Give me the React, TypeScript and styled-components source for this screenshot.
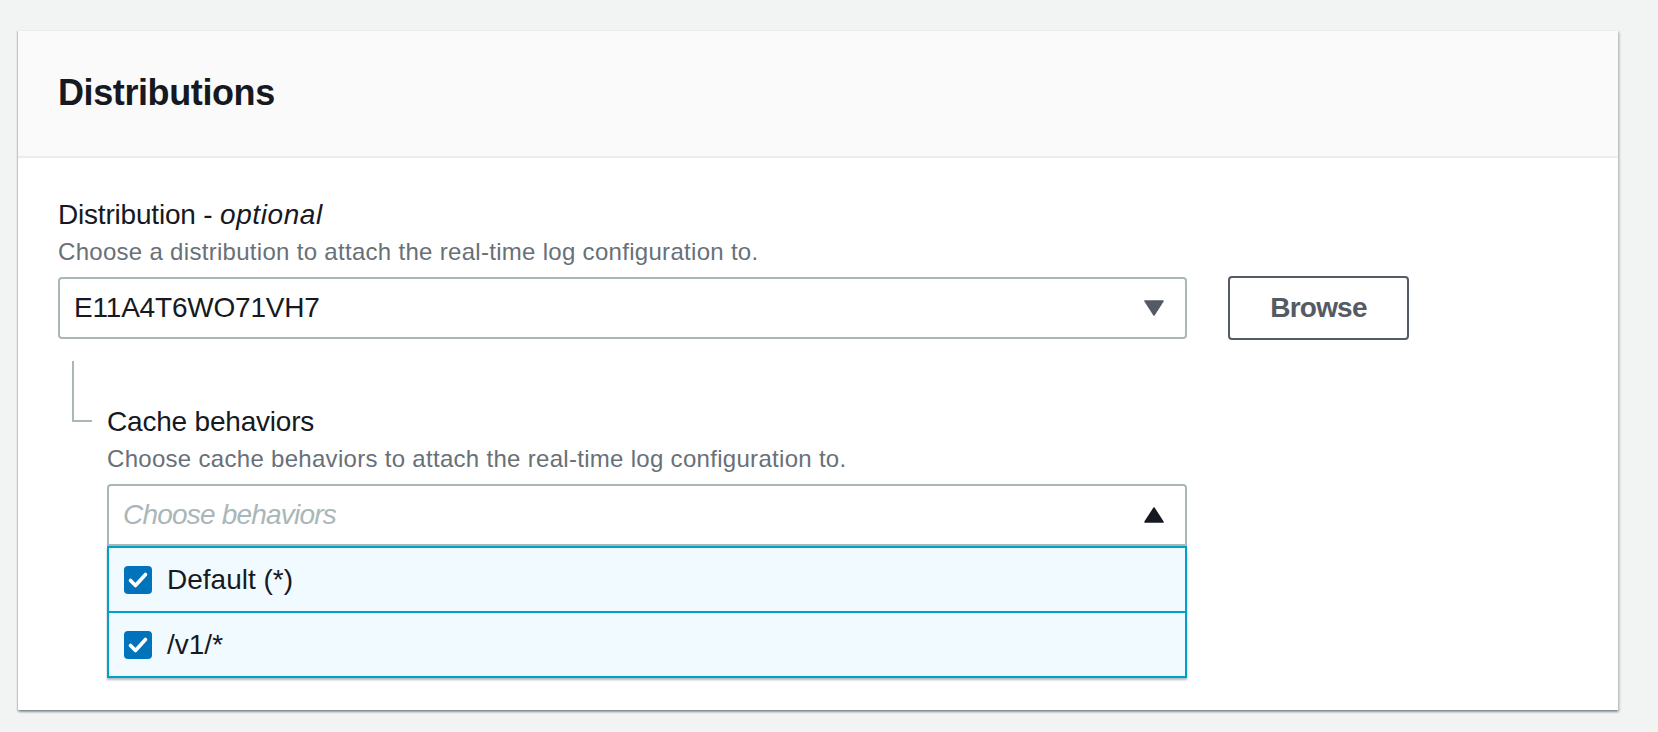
import styled, { createGlobalStyle } from 'styled-components';

const GlobalStyle = createGlobalStyle`
  html, body {
    margin: 0;
    padding: 0;
    background: #f2f3f3;
  }
  body {
    font-family: 'Liberation Sans', Arial, sans-serif;
    color: #16191f;
  }
`;

type Behavior = { id: string; label: string; checked: boolean };

const BEHAVIORS: Behavior[] = [
  { id: 'default', label: 'Default (*)', checked: true },
  { id: 'v1', label: '/v1/*', checked: true },
];

const Caret = ({ up, color }: { up?: boolean; color: string }) => (
  <svg width='20' height='16' viewBox='0 0 20 16' aria-hidden='true'>
    {up ? (
      <path d='M10 1 L19 15 L1 15 Z' fill={color} strokeLinejoin='round' stroke={color} strokeWidth='1.5' />
    ) : (
      <path d='M1 1 L19 1 L10 15 Z' fill={color} strokeLinejoin='round' stroke={color} strokeWidth='1.5' />
    )}
  </svg>
);

const CheckIcon = () => (
  <svg width='28' height='28' viewBox='0 0 28 28' aria-hidden='true'>
    <rect x='0' y='0' width='28' height='28' rx='4' fill='#0073bb' />
    <path
      d='M6.5 14.5 L11.5 19.5 L21.5 8.5'
      fill='none'
      stroke='#ffffff'
      strokeWidth='3.6'
      strokeLinecap='round'
      strokeLinejoin='round'
    />
  </svg>
);

export default function App() {
  return (
    <>
      <GlobalStyle />
      <Page>
        <Panel>
          <PanelHeader>
            <Title>Distributions</Title>
          </PanelHeader>
          <PanelBody>
            <Label>
              Distribution - <em>optional</em>
            </Label>
            <Description>Choose a distribution to attach the real-time log configuration to.</Description>
            <SelectRow>
              <Select>
                <SelectValue>E11A4T6WO71VH7</SelectValue>
                <Caret color='#545b64' />
              </Select>
              <Button>Browse</Button>
            </SelectRow>

            <Nested>
              <ConnectorColumn>
                <Connector />
              </ConnectorColumn>
              <NestedContent>
                <Label>Cache behaviors</Label>
                <Description>Choose cache behaviors to attach the real-time log configuration to.</Description>
                <MultiSelect>
                  <Select $open>
                    <Placeholder>Choose behaviors</Placeholder>
                    <Caret up color='#16191f' />
                  </Select>
                  <Menu>
                    {BEHAVIORS.map(b => (
                      <Option key={b.id}>
                        {b.checked && <CheckIcon />}
                        <OptionLabel>{b.label}</OptionLabel>
                      </Option>
                    ))}
                  </Menu>
                </MultiSelect>
              </NestedContent>
            </Nested>
          </PanelBody>
        </Panel>
      </Page>
    </>
  );
}

const Page = styled.div`
  padding: 30px 40px 22px 18px;
`;

const Panel = styled.section`
  width: 1600px;
  background: #ffffff;
  border-top: 1px solid #eaeded;
  box-shadow:
    0 2px 2px 0 rgba(0, 28, 36, 0.3),
    2px 2px 2px 0 rgba(0, 28, 36, 0.15),
    -1px 1px 1px 0 rgba(0, 28, 36, 0.12);
`;

const PanelHeader = styled.header`
  background: #fafafa;
  border-bottom: 2px solid #eaeded;
  padding: 40px 40px 41px;
`;

const Title = styled.h2`
  margin: 0;
  font-size: 36px;
  line-height: 44px;
  font-weight: 700;
  letter-spacing: -0.4px;
  color: #16191f;
`;

const PanelBody = styled.div`
  padding: 37px 40px 32px;
`;

const Label = styled.div`
  font-size: 28px;
  line-height: 40px;
  letter-spacing: -0.2px;
  color: #16191f;

  em {
    font-style: italic;
    letter-spacing: 0.6px;
  }
`;

const Description = styled.div`
  font-size: 24px;
  line-height: 32px;
  letter-spacing: 0.3px;
  color: #687078;
  margin-top: 1px;
`;

const SelectRow = styled.div`
  display: flex;
  align-items: center;
  gap: 41px;
  margin-top: 8px;
`;

const Select = styled.div<{ $open?: boolean }>`
  box-sizing: border-box;
  width: ${p => (p.$open ? '100%' : '1129px')};
  height: 62px;
  display: flex;
  align-items: center;
  justify-content: space-between;
  padding: 0 21px 0 14px;
  border: 2px solid #aab7b8;
  border-radius: ${p => (p.$open ? '4px 4px 0 0' : '4px')};
  background: #ffffff;
`;

const SelectValue = styled.span`
  font-size: 28px;
  letter-spacing: -0.2px;
  color: #16191f;
`;

const Placeholder = styled.span`
  font-size: 28px;
  font-style: italic;
  letter-spacing: -0.8px;
  color: #aab7b8;
`;

const Button = styled.button`
  box-sizing: border-box;
  width: 181px;
  height: 64px;
  border: 2px solid #545b64;
  border-radius: 4px;
  background: #ffffff;
  color: #545b64;
  font-family: 'Liberation Sans', Arial, sans-serif;
  font-size: 28px;
  font-weight: 700;
  letter-spacing: -0.8px;
  cursor: pointer;
`;

const Nested = styled.div`
  display: flex;
  margin-top: 21px;
`;

const ConnectorColumn = styled.div`
  width: 49px;
  flex-shrink: 0;
`;

const Connector = styled.div`
  margin-left: 14px;
  width: 18px;
  height: 59px;
  border-left: 2px solid #aab7b8;
  border-bottom: 2px solid #aab7b8;
`;

const NestedContent = styled.div`
  flex: 1;
  padding-top: 41px;
  max-width: 1080px;
`;

const MultiSelect = styled.div`
  margin-top: 9px;
`;

const Menu = styled.ul`
  list-style: none;
  margin: 0;
  padding: 0;
  border: 2px solid #00a1c9;
  background: #f1faff;
  box-shadow: 0 2px 2px 0 rgba(0, 28, 36, 0.3);
`;

const Option = styled.li`
  height: 63px;
  display: flex;
  align-items: center;
  gap: 15px;
  padding: 0 15px;

  & + & {
    border-top: 2px solid #00a1c9;
  }

  svg {
    flex-shrink: 0;
  }
`;

const OptionLabel = styled.span`
  font-size: 28px;
  color: #16191f;
`;
